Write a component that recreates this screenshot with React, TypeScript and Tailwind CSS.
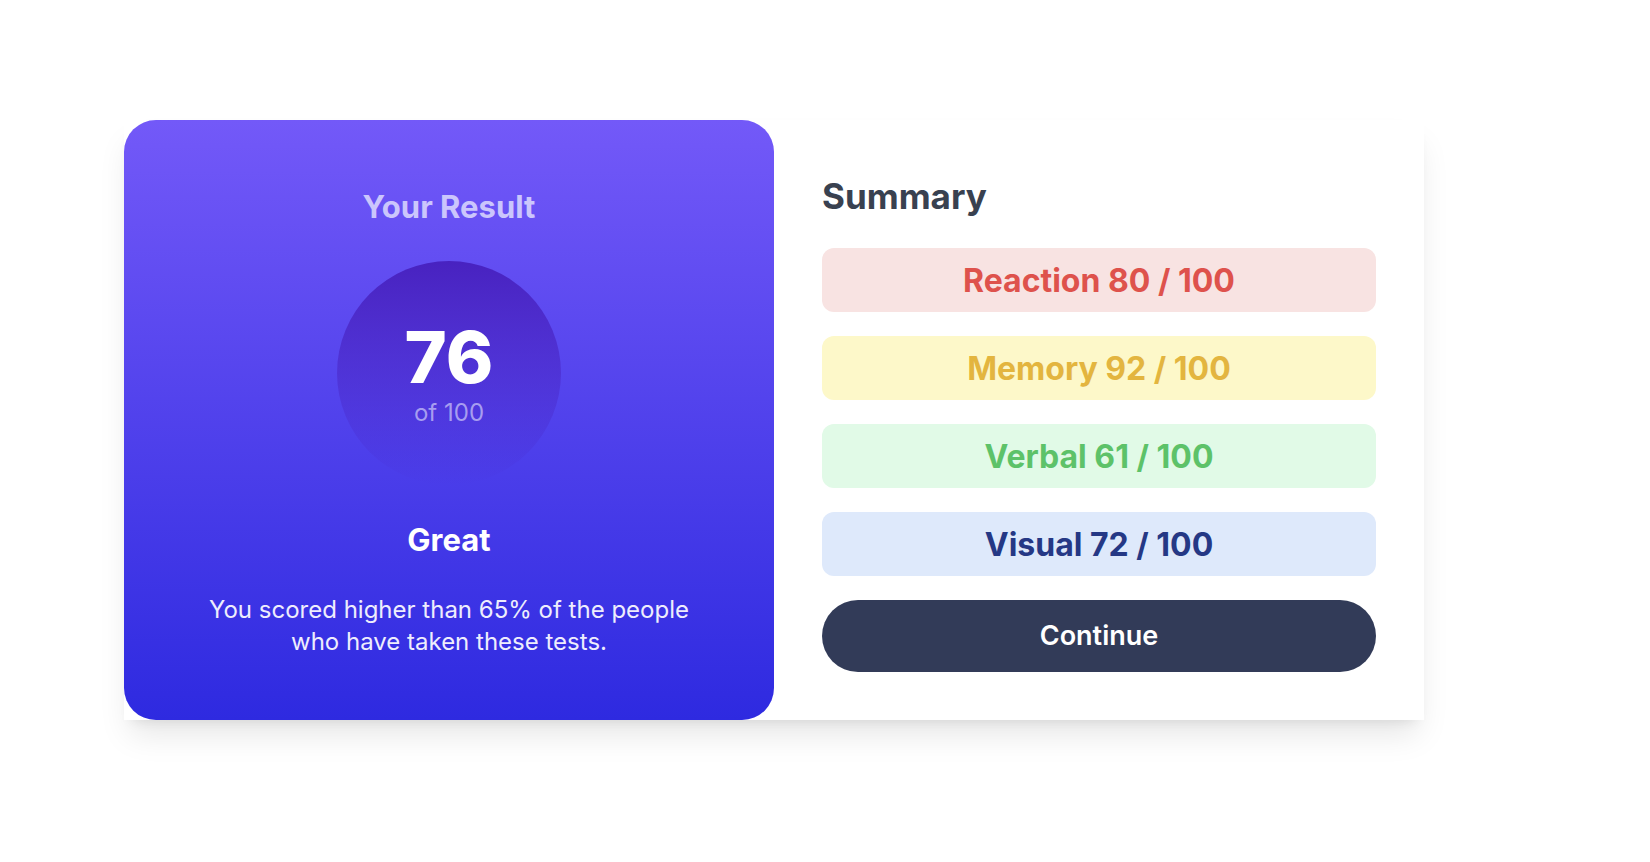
const scores = [
  { label: "Reaction", value: 80, tone: "bg-[#f8e3e2] text-[#de524c]" },
  { label: "Memory", value: 92, tone: "bg-[#fdf8c9] text-[#e3b53f]" },
  { label: "Verbal", value: 61, tone: "bg-[#e1fae7] text-[#5dc269]" },
  { label: "Visual", value: 72, tone: "bg-[#dee9fb] text-[#253885]" },
];

export default function App() {
  return (
    <main className="px-31 py-30 font-['Inter',sans-serif]">
      <div className="grid max-w-[1300px] grid-cols-2 bg-white shadow-[0_20px_30px_-6px_rgba(0,0,0,0.1),0_8px_12px_-8px_rgba(0,0,0,0.1)]">
        <section className="flex flex-col items-center rounded-4xl bg-linear-to-b/srgb from-[#7359f8] to-[#2e2ae0] px-16 pt-16 pb-12 text-center text-white">
          <h1 className="text-[31px] leading-[45px] font-bold text-[#cbc6fc]">Your Result</h1>
          <div className="mt-8 flex size-56 flex-col items-center justify-center rounded-full bg-linear-to-b/srgb from-[#4822c0] to-[#4822c0]/0">
            <strong className="text-[72px] leading-20 font-extrabold">76</strong>
            <span className="text-2xl text-[#a79df0]">of 100</span>
          </div>
          <h2 className="mt-8 text-[31px] leading-[45px] font-bold">Great</h2>
          <p className="mt-8 max-w-[500px] text-2xl text-[#eeedfd]">You scored higher than 65% of the people who have taken these tests.</p>
        </section>
        <section className="flex flex-col gap-6 p-12">
          <h2 className="text-[35px] leading-14 font-bold text-[#394150]">Summary</h2>
          {scores.map((s) => (
            <div key={s.label} className={`rounded-xl pt-[9px] pb-[7px] text-center text-[32px] leading-12 font-bold ${s.tone}`}>
              {s.label} {s.value} / 100
            </div>
          ))}
          <button type="button" className="h-18 rounded-full bg-[#323b58] text-[27px] font-semibold text-white">Continue</button>
        </section>
      </div>
    </main>
  );
}
